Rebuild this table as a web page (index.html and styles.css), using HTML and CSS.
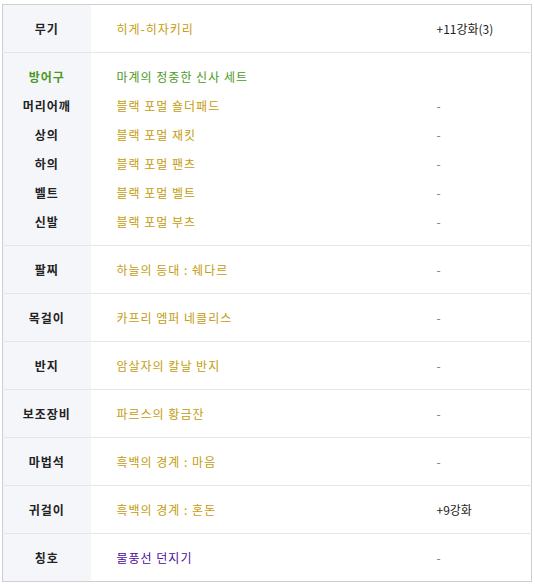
FILE: index.html
```html
<!DOCTYPE html>
<html>
<head>
    <link rel="stylesheet" href="styles.css">
</head>
<body>
<table class="equip">
    <colgroup>
        <col class="c-label">
        <col class="c-name">
        <col class="c-up">
    </colgroup>
    <tbody class="grp">
        <tr class="big"><th>무기</th><td class="gold">히게-히자키리</td><td>+11강화(3)</td></tr>
    </tbody>
    <tbody class="grp set">
        <tr><th class="green">방어구</th><td class="green">마계의 정중한 신사 세트</td><td></td></tr>
        <tr><th>머리어깨</th><td class="gold">블랙 포멀 숄더패드</td><td class="dash">-</td></tr>
        <tr><th>상의</th><td class="gold">블랙 포멀 재킷</td><td class="dash">-</td></tr>
        <tr><th>하의</th><td class="gold">블랙 포멀 팬츠</td><td class="dash">-</td></tr>
        <tr><th>벨트</th><td class="gold">블랙 포멀 벨트</td><td class="dash">-</td></tr>
        <tr><th>신발</th><td class="gold">블랙 포멀 부츠</td><td class="dash">-</td></tr>
    </tbody>
    <tbody class="grp">
        <tr class="big"><th>팔찌</th><td class="gold">하늘의 등대 : 쉐다르</td><td class="dash">-</td></tr>
    </tbody>
    <tbody class="grp">
        <tr class="big"><th>목걸이</th><td class="gold">카프리 엠퍼 네클리스</td><td class="dash">-</td></tr>
    </tbody>
    <tbody class="grp">
        <tr class="big"><th>반지</th><td class="gold">암살자의 칼날 반지</td><td class="dash">-</td></tr>
    </tbody>
    <tbody class="grp">
        <tr class="big"><th>보조장비</th><td class="gold">파르스의 황금잔</td><td class="dash">-</td></tr>
    </tbody>
    <tbody class="grp">
        <tr class="big"><th>마법석</th><td class="gold">흑백의 경계 : 마음</td><td class="dash">-</td></tr>
    </tbody>
    <tbody class="grp">
        <tr class="big"><th>귀걸이</th><td class="gold">흑백의 경계 : 혼돈</td><td>+9강화</td></tr>
    </tbody>
    <tbody class="grp">
        <tr class="big"><th>칭호</th><td class="purple">물풍선 던지기</td><td class="dash">-</td></tr>
    </tbody>
</table>
</body>
</html>
```

FILE: styles.css
```css
body {
    margin: 0;
    padding: 4px 0 0 2px;
    background-color: #fff;
    font-family: "Noto Sans CJK KR", "Noto Sans", sans-serif;
    font-size: 12px;
}
.equip {
    width: 530px;
    border: 1px solid #cfcfcf;
    border-collapse: collapse;
    table-layout: fixed;
}
.c-label {
    width: 88px;
}
.c-name {
    width: 346px;
}
.equip th {
    background-color: #f5f6fa;
    color: #222;
    font-weight: bold;
    text-align: center;
    letter-spacing: 1px;
    padding: 0;
}
.equip td {
    color: #222;
    padding: 0;
}
.equip td:nth-child(2) {
    padding-left: 26px;
    letter-spacing: 1px;
}
.grp + .grp tr:first-child th,
.grp + .grp tr:first-child td {
    border-top: 1px solid #e6e6e6;
}
.big th,
.big td {
    height: 47px;
}
.set th,
.set td {
    height: 29px;
}
.set tr:first-child th,
.set tr:first-child td {
    padding-top: 9px;
}
.set tr:last-child th,
.set tr:last-child td {
    padding-bottom: 9px;
}
.gold {
    color: #c49c0c !important;
}
.green {
    color: #4a9a22 !important;
}
.purple {
    color: #4d0a9e !important;
}
.dash {
    color: #777 !important;
}
```
